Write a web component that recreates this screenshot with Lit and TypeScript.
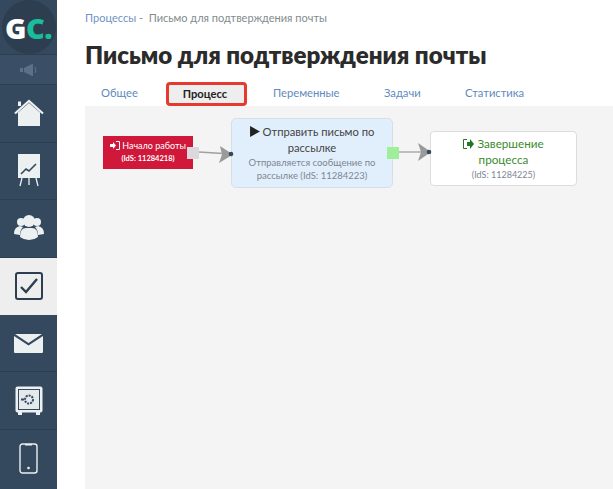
import { LitElement, html, css, svg } from "lit";
import { customElement } from "lit/decorators.js";

const ICON = "#ecf0f1";

@customElement("app-root")
export class AppRoot extends LitElement {
  static styles = css`
    :host { display: block; width: 613px; height: 489px; overflow: hidden; background: #fff;
      font-family: Lato, "Open Sans", sans-serif; }
    * { box-sizing: border-box; }
    .page { display: flex; height: 489px; }
    .side { width: 57px; flex: none; background: #34495e; display: flex; flex-direction: column; }
    .logoRow { height: 55px; display: flex; align-items: center; justify-content: center; border-bottom: 1px solid #2c3e50; }
    .logo { width: 54px; height: 54px; border-radius: 50%; background: #2c3e50; display: flex; align-items: center; justify-content: center;
      font-family: "Open Sans", sans-serif; font-weight: 800; font-size: 29px; letter-spacing: -.5px; color: #fff; line-height: 1; }
    .logo span { color: #1abc9c; }
    .spk { height: 30px; display: flex; align-items: center; justify-content: center; border-bottom: 1px solid #2c3e50; background: #3a4f66; }
    .item { height: 57.6px; display: flex; align-items: center; justify-content: center; border-bottom: 1px solid #2c3e50; flex: none; }
    .item.active { background: #eeeeee; border-bottom: none; }
    .main { flex: 1; min-width: 0; display: flex; }
    .gap { width: 28px; flex: none; }
    .content { flex: 1; display: flex; flex-direction: column; min-width: 0; }
    .crumbs { height: 35px; padding-top: 10px; font-size: 11px; line-height: 15px; color: #7f8c8d; white-space: nowrap; }
    .crumbs a { color: #6f93c4; }
    h1 { margin: 0; height: 50px; padding-top: 5px; font-size: 24.100px; line-height: 30px; font-weight: 800; color: #2b2b2b; white-space: nowrap; }
    .tabs { height: 21px; display: flex; align-items: center; font-size: 11.200px; color: #5f8ac0; white-space: nowrap; position: relative; }
    .tab { position: absolute; top: 0; line-height: 16px; }
    .tab.on { top: -3px; left: 81px; width: 81px; height: 24px; border: 3px solid #e53a2f; border-radius: 4px; background: #eeeeee;
      color: #222; font-weight: 700; text-align: center; line-height: 17px; padding-right: 3px; }
    .canvas { flex: 1; background: #f4f4f4; position: relative; }
    .node { position: absolute; text-align: center; }
    .start { left: 18px; top: 30px; width: 90px; height: 33px; background: #d0183a; color: #fff; font-size: 9px; line-height: 13px; padding-top: 3px; white-space: nowrap; }
    .start small { font-size: 7.500px; font-weight: 700; display: block; }
    .send { left: 146px; top: 12px; width: 162px; height: 70px; background: #e1effd; border: 1px solid #d5dfe8; border-radius: 5px;
      color: #444; font-size: 11.200px; line-height: 16px; padding-top: 5px; }
    .sub { display: block; font-size: 9.500px; line-height: 13px; color: #7c8691; }
    .end { left: 345px; top: 25px; width: 147px; height: 55px; background: #fff; border: 1px solid #ddd; border-radius: 4px;
      color: #3c8a2e; font-size: 11.700px; line-height: 16px; padding-top: 3px; }
    .end .sub { margin-top: 1px; font-size: 9px; }
    .wires { position: absolute; left: 0; top: 0; }
    .ic { display: inline-block; vertical-align: -1px; }
  `;

  render() {
    return html`<div class="page">
      <nav class="side">
        <div class="logoRow"><div class="logo">G<span>C.</span></div></div>
        <div class="spk">
          <svg width="20" height="14" viewBox="0 0 20 14"><g fill="#5d7186"><rect x="1" y="5" width="3" height="4"/><path d="M5 5l8-4h1v12h-1l-8-4z"/><path d="M16 4q2 3 0 6" fill="none" stroke="#5d7186"/></g></svg>
        </div>
        <div class="item">
          <svg width="30" height="28" viewBox="0 0 30 28"><path fill="${ICON}" d="M4 13.500L15 4l11 9.500V27H4z"/><path fill="none" stroke="${ICON}" stroke-width="2.200" d="M1 14.500L15 2l14 12.500"/><rect x="4" y="2.500" width="3" height="4.500" fill="${ICON}"/></svg>
        </div>
        <div class="item">
          <svg width="24" height="33" viewBox="0 0 24 33"><path fill="${ICON}" d="M1 0h22v24H1z"/><path fill="none" stroke="#34495e" stroke-width="1.600" d="M4 20l5-5 3 2 7-7"/><path fill="none" stroke="${ICON}" stroke-width="1.300" d="M5 24l-2 8M19 24l2 8M12 24v7"/></svg>
        </div>
        <div class="item">
          <svg width="30" height="26" viewBox="0 0 30 26"><g fill="${ICON}"><circle cx="7" cy="7" r="4"/><circle cx="23" cy="7" r="4"/><path d="M0 19q0-7 6-8l3 1q-3 3-3 8zM30 19q0-7-6-8l-3 1q3 3 3 8z"/><circle cx="15" cy="6" r="6"/><path d="M6 22q0-9 6-9h6q6 0 6 9-4 3-9 3t-9-3z"/></g></svg>
        </div>
        <div class="item active" style="height:57px">
          <svg width="28" height="28" viewBox="0 0 28 28"><rect x="1" y="1" width="26" height="26" rx="2" fill="none" stroke="#2c3e50" stroke-width="2"/><path fill="none" stroke="#2c3e50" stroke-width="2.400" d="M6 15l5 5L22 7"/></svg>
        </div>
        <div class="item">
          <svg width="29" height="19" viewBox="0 0 29 19"><path fill="${ICON}" d="M1 0l13.500 9L28 0zM0 2l14.500 9.500L29 2v16a1 1 0 0 1-1 1H1a1 1 0 0 1-1-1z"/></svg>
        </div>
        <div class="item">
          <svg width="28" height="29" viewBox="0 0 28 29"><rect x=".5" y=".5" width="27" height="26" rx="2" fill="${ICON}"/><rect x="3.500" y="3.500" width="21" height="20" fill="#e4e9ec" stroke="#34495e"/><path fill="${ICON}" d="M3 26h4v3H3zM21 26h4v3h-4z"/><circle cx="14" cy="13.500" r="4" fill="none" stroke="#34495e" stroke-width="2" stroke-dasharray="2 1"/><rect x="6" y="12.500" width="3" height="2" fill="#34495e"/></svg>
        </div>
        <div class="item" style="border-bottom:0">
          <svg width="19" height="31" viewBox="0 0 19 31"><rect x="1" y="1" width="17" height="29" rx="2.500" fill="none" stroke="${ICON}" stroke-width="1.400"/><rect x="6" y="1" width="7" height="1.500" fill="${ICON}"/><circle cx="9.500" cy="25" r="1.300" fill="${ICON}"/></svg>
        </div>
      </nav>
      <div class="main">
        <div class="gap"></div>
        <div class="content">
          <div class="crumbs"><a>Процессы</a> -&nbsp; Письмо для подтверждения почты</div>
          <h1>Письмо для подтверждения почты</h1>
          <div class="tabs">
            <span class="tab" style="left:16px">Общее</span>
            <span class="tab on">Процесс</span>
            <span class="tab" style="left:188px">Переменные</span>
            <span class="tab" style="left:299px">Задачи</span>
            <span class="tab" style="left:380px">Статистика</span>
          </div>
          <div class="canvas">
            <div class="node start"><svg class="ic" width="10" height="9" viewBox="0 0 10 9"><path fill="#fff" d="M0 3h3V1l3 3.500L3 8V6H0zM6 0h3a1 1 0 0 1 1 1v7a1 1 0 0 1-1 1H6V8h3V1H6z"/></svg> Начало работы<small>(IdS: 11284218)</small></div>
            <div class="node send"><svg class="ic" width="10" height="11" viewBox="0 0 9 10"><path fill="#222" d="M0 0l9 5-9 5z"/></svg> Отправить письмо по<br>рассылке<span class="sub">Отправляется сообщение по<br>рассылке (IdS: 11284223)</span></div>
            <div class="node end"><svg class="ic" width="11" height="10" viewBox="0 0 11 10"><path fill="#1f7a1f" d="M4 3h3V0l4 5-4 5V7H4zM0 1a1 1 0 0 1 1-1h3v1H1v8h3v1H1a1 1 0 0 1-1-1z"/></svg> Завершение<br>процесса<span class="sub">(IdS: 11284225)</span></div>
            ${this.wires()}
          </div>
        </div>
      </div>
    </div>`;
  }

  wires() {
    return html`<svg class="wires" width="528" height="100" viewBox="0 0 528 100">
      ${svg`
      <rect x="102" y="41" width="12" height="12" fill="#dcd9de"/>
      <path d="M114 46l32 2" stroke="#a0a0a0" stroke-width="1.300"/>
      <path d="M135 40l13 8.500-14 8.500 3-8.500z" fill="#9a9a9a"/>
      <circle cx="146" cy="48" r="2.300" fill="#34495e"/>
      <rect x="302" y="41" width="12" height="12" fill="#9fee9a"/>
      <path d="M314 46h30" stroke="#a0a0a0" stroke-width="1.300"/>
      <path d="M333 37l13 9-13 9 3-9z" fill="#9a9a9a"/>
      <circle cx="344" cy="46" r="2.300" fill="#34495e"/>
      `}
    </svg>`;
  }
}
